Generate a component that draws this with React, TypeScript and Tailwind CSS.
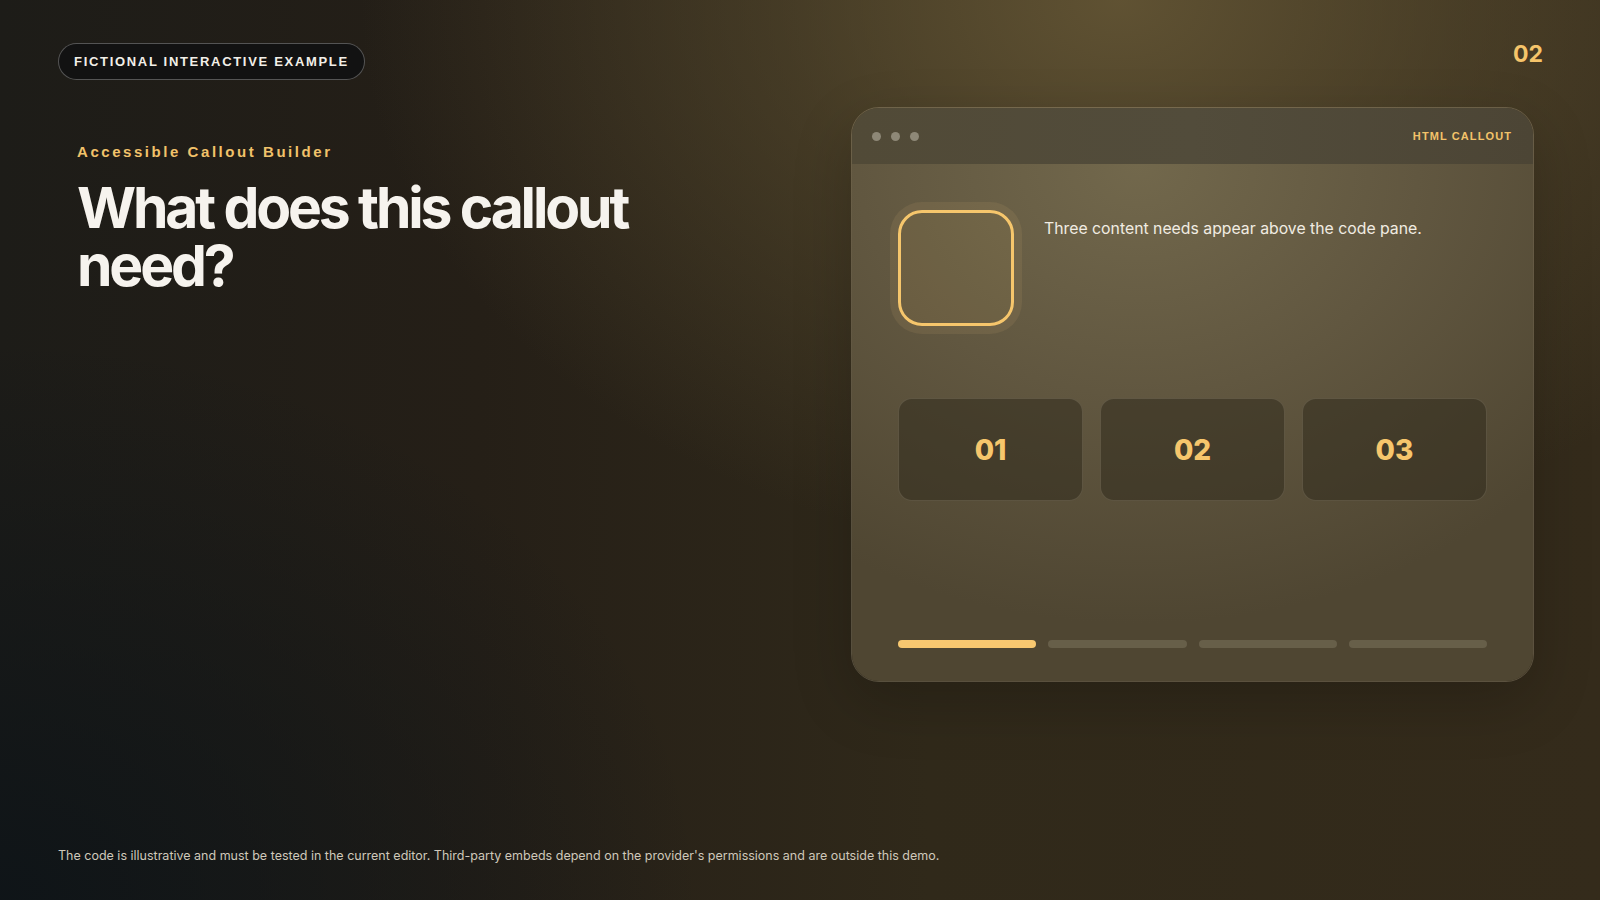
import React from "react";

export default function App() {
  const bars = [true, false, false, false];
  return (
    <div
      className="w-[1600px] h-[900px] overflow-hidden flex flex-col px-[58px] pb-[35px] bg-[radial-gradient(ellipse_760px_560px_at_70%_0%,rgba(98,84,52,0.95)_0%,rgba(98,84,52,0.45)_45%,rgba(98,84,52,0)_100%),radial-gradient(ellipse_700px_560px_at_0%_100%,rgba(14,20,24,0.95)_0%,rgba(14,20,24,0)_100%),linear-gradient(90deg,#1d1c18_0%,#251f17_30%,#30291a_58%,#342b1b_100%)]"
      style={{ fontFamily: "Inter, 'Noto Sans', sans-serif" }}
    >
      {/* header */}
      <div className="flex items-start justify-between pt-[43px]">
        <div className="h-[37px] px-[15px] rounded-full border border-[rgba(255,255,255,0.28)] bg-[#121212] flex items-center">
          <span
            className="text-[13px] font-bold tracking-[0.13em] text-[#f2efe8] leading-none"
            style={{ fontFamily: "'Liberation Sans', Arial, sans-serif" }}
          >
            FICTIONAL INTERACTIVE EXAMPLE
          </span>
        </div>
        <div className="text-[23px] font-bold text-[#f5c46a] leading-none mt-[-7px] mr-[-1px] h-[37px] flex items-center">02</div>
      </div>

      {/* main */}
      <div className="flex items-start justify-between mt-[27px] pr-[8px]">
        <div className="pl-[19px] pt-[35px]">
          <div
            className="text-[15px] leading-[20px] font-bold tracking-[0.17em] text-[#f1c26a]"
            style={{ fontFamily: "'Liberation Sans', Arial, sans-serif" }}
          >
            Accessible Callout Builder
          </div>
          <h1 className="mt-[17px] text-[57px] leading-[58px] font-bold tracking-[-0.055em] text-[#f6f3ee] w-[600px]">
            What does this callout need?
          </h1>
        </div>

        <div className="w-[683px] h-[575px] rounded-[28px] border border-[rgba(255,240,210,0.2)] overflow-hidden flex flex-col shadow-[0_20px_60px_rgba(0,0,0,0.2)]">
          <div className="h-[56px] shrink-0 flex items-center justify-between pl-[20px] pr-[21px] bg-[linear-gradient(90deg,#514a37_0%,#524c3b_50%,#4c4535_100%)]">
            <div className="flex items-center gap-[10px]">
              <span className="w-[9px] h-[9px] rounded-full bg-[#8e8877]" />
              <span className="w-[9px] h-[9px] rounded-full bg-[#8e8877]" />
              <span className="w-[9px] h-[9px] rounded-full bg-[#8e8877]" />
            </div>
            <span
              className="text-[11px] font-bold tracking-[0.1em] text-[#f3c36a]"
              style={{ fontFamily: "'Liberation Sans', Arial, sans-serif" }}
            >
              HTML CALLOUT
            </span>
          </div>
          <div className="flex-1 flex flex-col px-[46px] pt-[46px] bg-[radial-gradient(ellipse_560px_460px_at_42%_0%,#72684c_0%,#615740_50%,#4f4632_100%)]">
            <div className="flex items-start">
              <div className="w-[116px] h-[116px] shrink-0 rounded-[24px] border-[3px] border-[#f6c66c] bg-[rgba(245,196,106,0.07)] shadow-[0_0_0_8px_rgba(245,205,130,0.09)]" />
              <p className="ml-[30px] pt-[7px] text-[15.8px] leading-[24px] text-[#f1ece2]">
                Three content needs appear above the code pane.
              </p>
            </div>
            <div className="mt-[72px] grid grid-cols-3 gap-[17px]">
              {["01", "02", "03"].map((n) => (
                <div
                  key={n}
                  className="h-[103px] rounded-[14px] border border-[rgba(255,240,210,0.14)] bg-[rgba(50,44,30,0.55)] flex items-center justify-center"
                >
                  <span className="text-[28px] font-extrabold text-[#f6c66c] leading-none">{n}</span>
                </div>
              ))}
            </div>
            <div className="mt-[139px] grid grid-cols-4 gap-[12px]">
              {bars.map((a, i) => (
                <div
                  key={i}
                  className={a ? "h-[8px] rounded-full bg-[#f8c870]" : "h-[8px] rounded-full bg-[rgba(255,245,220,0.14)]"}
                />
              ))}
            </div>
          </div>
        </div>
      </div>

      {/* footer */}
      <div className="mt-auto text-[12.5px] leading-[18px] text-[#cfc8ba]">
        The code is illustrative and must be tested in the current editor. Third-party embeds depend on the provider's permissions and are outside this demo.
      </div>
    </div>
  );
}
